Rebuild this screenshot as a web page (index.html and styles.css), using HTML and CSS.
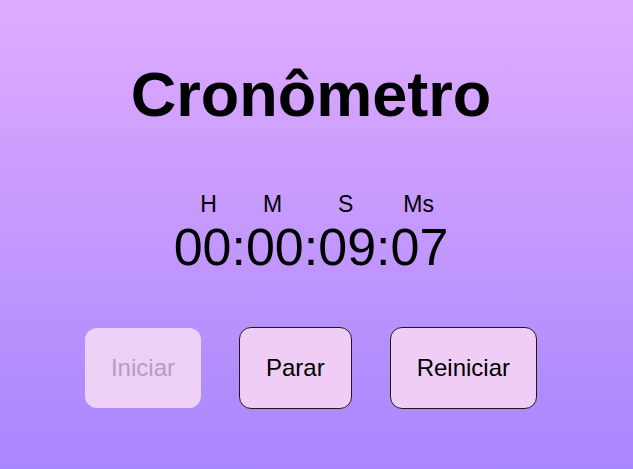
FILE: index.html
```html
<!DOCTYPE html>
<html lang="pt">
<head>
<meta charset="utf-8">
<title>Cronômetro</title>
<link rel="stylesheet" href="styles.css">
</head>
<body>
<main class="app">
  <h1 class="title">Cronômetro</h1>
  <div class="clock">
    <div class="labels">
      <span class="label">H</span>
      <span class="label">M</span>
      <span class="label">S</span>
      <span class="label">Ms</span>
    </div>
    <div class="time">00:00:09:07</div>
  </div>
  <div class="actions">
    <button class="btn btn-disabled" disabled>Iniciar</button>
    <button class="btn">Parar</button>
    <button class="btn">Reiniciar</button>
  </div>
</main>
</body>
</html>
```

FILE: styles.css
```css
html, body {
  margin: 0;
  height: 100%;
}
body {
  background: linear-gradient(to bottom, #dfabfe, #a886fd);
  font-family: "Liberation Sans", Arial, sans-serif;
  color: #000;
}
.app {
  display: flex;
  flex-direction: column;
  align-items: center;
  padding-top: 58px;
  padding-right: 11px;
}
.title {
  margin: 0;
  font-size: 63px;
  font-weight: bold;
  line-height: normal;
}
.clock {
  display: flex;
  flex-direction: column;
  margin-top: 61px;
}
.labels {
  display: grid;
  grid-template-columns: 70px 58px 88px 58px;
  margin-bottom: -1px;
}
.label {
  font-size: 23px;
  line-height: normal;
  text-align: center;
}
.time {
  font-size: 52px;
  line-height: normal;
  white-space: nowrap;
}
.actions {
  display: flex;
  gap: 38px;
  align-items: center;
  margin-top: 50px;
}
.btn {
  font-family: "Liberation Sans", Arial, sans-serif;
  font-size: 24px;
  padding: 26px 26px;
  background: #f0cdf5;
  color: #000;
  border: 1px solid #1a1a1a;
  border-radius: 12px;
}
.btn-disabled {
  border: none;
  background: #efd1f8;
  color: #b69cc2;
}
```
